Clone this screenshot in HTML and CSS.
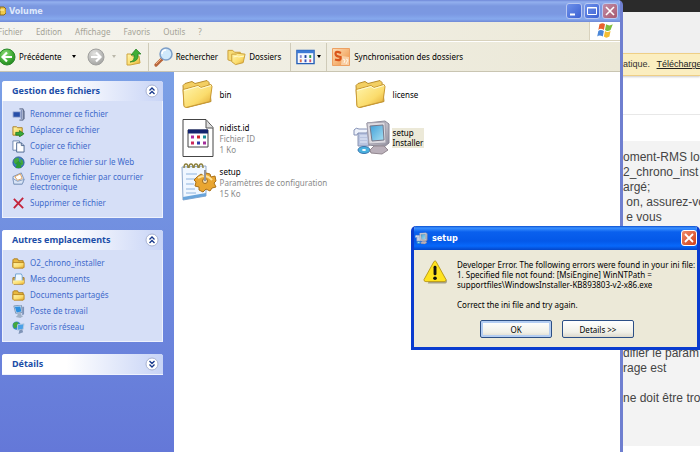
FILE: index.html
```html
<!DOCTYPE html>
<html lang="fr">
<head>
<meta charset="utf-8">
<title>Volume</title>
<link rel="stylesheet" href="styles.css">
</head>
<body>
<svg class="defs" aria-hidden="true">
  <defs>
    <linearGradient id="gold" x1="0" y1="0" x2="1" y2="1"><stop offset="0" stop-color="#fff6b0"/><stop offset=".6" stop-color="#fbdc6c"/><stop offset="1" stop-color="#dfa32c"/></linearGradient>
    <linearGradient id="screen" x1="0" y1="0" x2="1" y2="1"><stop offset="0" stop-color="#3f9fd8"/><stop offset="1" stop-color="#a9e0f2"/></linearGradient>
    <linearGradient id="metal" x1="0" y1="0" x2="1" y2="1"><stop offset="0" stop-color="#eeeef2"/><stop offset="1" stop-color="#8d8b9a"/></linearGradient>
    <radialGradient id="green" cx=".4" cy=".3" r=".8"><stop offset="0" stop-color="#8fdc78"/><stop offset=".6" stop-color="#3ca832"/><stop offset="1" stop-color="#1d7a1d"/></radialGradient>
    <radialGradient id="grey" cx=".4" cy=".3" r=".8"><stop offset="0" stop-color="#e2e2e0"/><stop offset="1" stop-color="#9d9d9b"/></radialGradient>
    <linearGradient id="orange" x1="0" y1="0" x2="1" y2="1"><stop offset="0" stop-color="#fbdcb8"/><stop offset=".5" stop-color="#f6b87c"/><stop offset="1" stop-color="#ec8a3c"/></linearGradient>
    <symbol id="folder" viewBox="0 0 31 29">
      <path d="M1 6 3 4 10 2 13 4 25 1 27 3 29 22 5 28 2 26z" fill="#f3cf62" stroke="#b98d2e"/>
      <path d="M1 10 5 9 16 6 19 8 29 5 30 7 28 22 4 28 2 27z" fill="url(#gold)" stroke="#c99a34"/>
      <path d="M2 11 16 7 19 9 29 6" fill="none" stroke="#fffbd6"/>
    </symbol>
    <symbol id="folder-small" viewBox="0 0 14 12">
      <path d="M1 10V2l1-1h4l1 2h5v7z" fill="#e9b93f" stroke="#a97a1c"/>
      <path d="M1 5h12v5l-1 1H2l-1-1z" fill="url(#gold)" stroke="#b98620"/>
    </symbol>
    <symbol id="computer" viewBox="0 0 14 14">
      <path d="M2 1 10 0 11 8 4 9z" fill="#d5e4f4" stroke="#7f97b5"/>
      <path d="M3 2 9 1.500 10 7 5 8z" fill="#2c8fe0"/>
      <path d="M6 9h4v2l2 1-3 2-5-1 2-2z" fill="#9fb0c6"/>
      <path d="M11 2h2v8l-2 1z" fill="#7d93b8"/>
    </symbol>
    <symbol id="installer" viewBox="0 0 38 34">
      <path d="M5 9h12l-1 16H5z" fill="#b9c4e0" stroke="#8a94b2"/>
      <path d="M1 9q2-3 5-1h9l-1 4H5L4 14H1z" fill="#eef2fb" stroke="#8390b5"/>
      <path d="M7 15h7M7 18h7M7 21h7" stroke="#e4eaf8"/>
      <ellipse cx="11" cy="29" rx="6" ry="3.500" fill="#49b1df" stroke="#3874ae"/>
      <ellipse cx="11" cy="29" rx="2" ry="1" fill="#fff"/>
      <path d="M14 2 32 0 36 3 36 22 31 26 16 24z" fill="url(#metal)" stroke="#898796"/>
      <path d="M14 2 32 1 33 22 16 23z" fill="#dcdae0" stroke="#a3a0ad"/>
      <path d="M17 5 30 4 31 19 19 20z" fill="url(#screen)" stroke="#777788"/>
      <path d="M21 25h10l4 4-6 4-11-1-1-3z" fill="#bab0ba" stroke="#92878f"/>
    </symbol>
    <symbol id="chevrons" viewBox="0 0 14 14">
      <circle cx="7" cy="7" r="6" fill="#fff" stroke="#a9b3d2"/>
      <path d="M4.500 6.500 7 4 9.500 6.500M4.500 10 7 7.500 9.500 10" fill="none" stroke="#17388c" stroke-width="1.300"/>
    </symbol>
  </defs>
</svg>

<main class="page">
  <div class="page-top"></div>
  <div class="page-head"></div>
  <p class="notice">atique. <a href="#">Télécharger</a></p>
  <div class="page-gap"></div>
  <div class="code">
    <p>oment-RMS lo<br>2_chrono_inst<br>argé;<br>&nbsp;on, assurez-vo<br>&nbsp;e vous</p>
    <p class="code-rest">difier le param<br>rage est<br><br>ne doit être tro</p>
  </div>
</main>

<section class="explorer" aria-label="Volume">
  <header class="titlebar">
    <svg class="title-icon" viewBox="0 0 6 10"><path d="M0 1h4l2 2v4L4 9H0z" fill="#f0ca4b" stroke="#8c6a1c"/><path d="M0 4h4" stroke="#fff5b8"/></svg>
    <h1>Volume</h1>
    <div class="controls">
      <button aria-label="Réduire"><svg viewBox="0 0 14 14"><path d="M3 10.500h5" stroke="#fff" stroke-width="2"/></svg></button>
      <button aria-label="Agrandir"><svg viewBox="0 0 14 14"><path d="M2.500 3.500h9v7h-9zM2 4h10" fill="none" stroke="#fff"/></svg></button>
      <button class="faded-close" aria-label="Fermer"><svg viewBox="0 0 14 14"><path d="m3 3 8 8M11 3l-8 8" stroke="#fff" stroke-width="1.600"/></svg></button>
    </div>
  </header>
  <nav class="menu" aria-label="Menu">
    <button>Fichier</button><button>Edition</button><button>Affichage</button><button>Favoris</button><button>Outils</button><button>?</button>
    <span class="flag"><svg viewBox="0 0 18 16"><path d="M4 2q3-2 5 0L8 7Q5 5 3 7z" fill="#e8602c"/><path d="M10 2q3 2 6 0l-2 5q-3 2-5 0z" fill="#7fbd3c"/><path d="M3 8q2-2 5 0l-1 5q-3-2-5 0z" fill="#4a86d8"/><path d="M9 8q2 2 5 0l-1 5q-3 2-5 0z" fill="#f4bd33"/></svg></span>
  </nav>
  <div class="toolbar">
    <button class="back"><svg viewBox="0 0 18 18"><circle cx="9" cy="9" r="8" fill="url(#green)" stroke="#2b8a2b"/><path d="M14 9H5M9 4.500 4.500 9 9 13.500" fill="none" stroke="#fff" stroke-width="2.200"/></svg>Précédente<i class="caret"></i></button>
    <button class="forward" aria-label="Suivante"><svg viewBox="0 0 18 18"><circle cx="9" cy="9" r="8" fill="url(#grey)" stroke="#a0a09e"/><path d="M4 9h9M9 4.500 13.500 9 9 13.500" fill="none" stroke="#fff" stroke-width="2.200"/></svg><i class="caret pale"></i></button>
    <button class="up" aria-label="Dossier parent"><svg viewBox="0 0 18 18"><path d="M2 6h4l1 2h7l1 7-10 2H2z" fill="url(#gold)" stroke="#cfa43c"/><path d="M5 14q5-1 4-7H6l5-6 5 5h-3q1 8-8 8z" fill="#3fae35" stroke="#23801f" stroke-width=".7"/></svg></button>
    <button class="search"><svg viewBox="0 0 20 20"><path d="m2 18 6-6" stroke="#b8653a" stroke-width="3.200" stroke-linecap="round"/><path d="m2 17 6-6" stroke="#f0b183"/><circle cx="12" cy="7" r="6" fill="#cfe9fb" stroke="#7d9fc8" stroke-width="1.500"/><path d="M8 7q0-4 4-4" fill="none" stroke="#fff" stroke-width="1.500"/></svg>Rechercher</button>
    <button class="folders"><svg viewBox="0 0 20 18"><path d="M1 2h5l2 2h6v9H4l-3-1z" fill="#f7dc77" stroke="#c99d36"/><path d="M5 6h5l1-1 8 1-2 9-8 2-4-3z" fill="url(#gold)" stroke="#c99d36"/><path d="m7 9 4-1 1 1 6-1" stroke="#fffbd2" fill="none"/></svg>Dossiers</button>
    <button class="views" aria-label="Affichage"><svg viewBox="0 0 20 16"><path d="M1 1h18v14H1z" fill="#f5f9ff" stroke="#2761b8" stroke-width="1.500"/><path d="M1 2.500h18" stroke="#3d7bd6" stroke-width="3"/><g stroke-width="3"><path d="M4 7.500h2" stroke="#8a8ad0"/><path d="M9 7.500h2" stroke="#2044a0"/><path d="M14 7.500h2" stroke="#2f9a3e"/><path d="M4 12h2" stroke="#dc6a4b"/><path d="M9 12h2" stroke="#3c54b8"/><path d="M14 12h2" stroke="#cf5470"/></g></svg><i class="caret"></i></button>
    <button class="sync"><svg viewBox="0 0 18 18"><path d="M.5.5h17v17H.5z" fill="url(#orange)" stroke="#eda062"/><path d="M10 8l7 1v8H9z" fill="#f9cfa4"/><path d="m11 11 2 1-1 3M14 11l2 1-2 4" fill="none" stroke="#fff3e4"/><path d="M9 5Q3.500 2.500 3.500 5.500T8.500 9Q9.500 13.500 3 11.500" fill="none" stroke="#d9541a" stroke-width="2.200"/></svg>Synchronisation des dossiers</button>
  </div>
  <div class="content">
    <aside class="tasks">
      <section class="panel">
        <header><h2>Gestion des fichiers</h2><button aria-label="Réduire"><svg><use href="#chevrons"/></svg></button></header>
        <ul>
          <li><a href="#"><svg viewBox="0 0 14 14"><path d="M1 4h8v6H1z" fill="#284fa8" stroke="#b4bfdd"/><path d="M8 1h4v12H8M12 3h1v9" fill="none" stroke="#4a5878"/><path d="M10 2v10" stroke="#6679a8"/></svg>Renommer ce fichier</a></li>
          <li><a href="#"><svg viewBox="0 0 14 14"><path d="M1 3h4l1 1h5v8H1z" fill="url(#gold)" stroke="#a97c20"/><path d="M4 9h4V7l5 3.500L8 14v-2H4z" fill="#39a93a" stroke="#197020" stroke-width=".7"/></svg>Déplacer ce fichier</a></li>
          <li><a href="#"><svg viewBox="0 0 14 14"><path d="M1 1h7v10H1z" fill="#fff" stroke="#6882ac"/><path d="M5 3h5l3 3v7H5z" fill="#fff" stroke="#49658f"/><path d="M10 3v3h3" fill="none" stroke="#49658f"/></svg>Copier ce fichier</a></li>
          <li><a href="#"><svg viewBox="0 0 14 14"><circle cx="7" cy="7" r="6" fill="#3c7ec7" stroke="#285992"/><path d="M2 4q3-3 5-2l1 3-4 4-2-2zM9 3q4 2 3 6l-3 2z" fill="#44a840"/><path d="m4 13 1-4H3l4-4 4 4H9l1 4z" fill="#2a9b35"/></svg>Publier ce fichier sur le Web</a></li>
          <li class="two-line"><a href="#"><svg viewBox="0 0 14 14"><path d="m1 5 9-4 3 7-2 5H2z" fill="#eef3fc" stroke="#7791ba"/><path d="m3 5 6-3 2 5-5 2z" fill="#fff" stroke="#db9c54"/><path d="m1 7 5 3 7-2-2 5H2z" fill="#d9e5f7" stroke="#829abf"/></svg>Envoyer ce fichier par courrier électronique</a></li>
          <li><a href="#"><svg viewBox="0 0 14 14"><path d="m2 2 10 10M12 1 2 12" stroke="#c3243c" stroke-width="2" fill="none"/></svg>Supprimer ce fichier</a></li>
        </ul>
      </section>
      <section class="panel">
        <header><h2>Autres emplacements</h2><button aria-label="Réduire"><svg><use href="#chevrons"/></svg></button></header>
        <ul>
          <li><a href="#"><svg><use href="#folder-small"/></svg>O2_chrono_installer</a></li>
          <li><a href="#"><svg viewBox="0 0 14 14"><path d="M1 5h12v6l-1 1H2l-1-1z" fill="#e4b34a" stroke="#997025"/><path d="M4 1h6l1 2v6H3z" fill="#eff8ff" stroke="#6fa2cf"/><path d="M1 8h12v4H1z" fill="url(#gold)"/></svg>Mes documents</a></li>
          <li><a href="#"><svg><use href="#folder-small"/></svg>Documents partagés</a></li>
          <li><a href="#"><svg><use href="#computer"/></svg>Poste de travail</a></li>
          <li><a href="#"><svg viewBox="0 0 14 14"><circle cx="5" cy="5" r="4.500" fill="#3586cf"/><path d="M1 3q3-3 6-1L5 7 2 8z" fill="#45a83d"/><path d="m6 4 7-1-1 6-6 1z" fill="#4aa1e8" stroke="#b9cbe0"/><path d="m8 10 3-1 1 3-5 2z" fill="#7f94b7"/></svg>Favoris réseau</a></li>
        </ul>
      </section>
      <section class="panel">
        <header><h2>Détails</h2><button class="expand" aria-label="Développer"><svg><use href="#chevrons"/></svg></button></header>
      </section>
    </aside>
    <ul class="files">
      <li><svg class="folder"><use href="#folder"/></svg><div><b>bin</b></div></li>
      <li><svg class="folder"><use href="#folder"/></svg><div><b>license</b></div></li>
      <li><svg viewBox="0 0 32 38"><path d="M1 .5h23l7 8v29H1z" fill="#fff" stroke="#444"/><path d="M24 1v8h7" fill="#ddd" stroke="#555"/><path d="M6 11h20v17H6z" fill="#fff" stroke="#444"/><path d="M6 12.500h20" stroke="#14246e" stroke-width="4"/><g stroke-width="3"><path d="M9 18h3" stroke="#b02aa0"/><path d="M15 18h3" stroke="#d02428"/><path d="M21 18h3" stroke="#188c96"/><path d="M9 24h3" stroke="#cc285c"/><path d="M15 24h3" stroke="#2d3caa"/><path d="M21 24h3" stroke="#a42e9a"/></g></svg><div><b>nidist.id</b><span>Fichier ID</span><span>1 Ko</span></div></li>
      <li class="selected"><svg class="wide"><use href="#installer"/></svg><div><b>setup<br>Installer</b></div></li>
      <li><svg class="wide" viewBox="0 0 36 38"><path d="M1 4 25 3v30L2 37z" fill="#f0f7ff" stroke="#8fa9cc"/><path d="m2 34 23-4v3L2 37z" fill="#6aa5db"/><path d="M5 11h11M5 16h10M5 21h8M5 26h9M5 30h10" stroke="#8fb4de"/><path d="M3 5q0-4 2-4t2 4M8 5q0-4 2-4t2 4M13 5q0-4 2-4t2 4M18 5q0-4 2-4t2 4" fill="none" stroke="#8e8240" stroke-width="1.500"/><path d="m16 14 4-3 3 2 2-3 4 1 1 3 4-1 1 5-2 2 2 4-4 1-2 3-4-2-3 3-4-2v-3l-4-1 1-4-2-2 3-3z" fill="#e9a631" stroke="#aa7119"/><path d="M17 15q8-5 14 2" fill="none" stroke="#ffe094" stroke-width="2"/><circle cx="24" cy="18" r="2.500" fill="#f5dfb1" stroke="#a56d18"/><path d="M23 7h2v11h-2z" fill="#94949a"/></svg><div><b>setup</b><span>Paramètres de configuration</span><span>15 Ko</span></div></li>
    </ul>
  </div>
</section>

<section class="dialog" role="alertdialog" aria-labelledby="dialog-title">
  <header>
    <svg class="dialog-icon"><use href="#installer"/></svg>
    <h2 id="dialog-title">setup</h2>
    <button class="close" aria-label="Fermer"><svg viewBox="0 0 14 14"><path d="m3 3 8 8M11 3l-8 8" stroke="#fff" stroke-width="1.800"/></svg></button>
  </header>
  <div class="dialog-body">
    <div class="message">
      <svg viewBox="0 0 26 26"><path d="M13 3 25 22q0 3-3 3H5z" fill="#a5a18a"/><path d="M11.500 2q1.500-1 2 0L24 21q0 2-2 2H3q-2 0-2-2z" fill="#ffe31f" stroke="#bb9b16"/><path d="M12.500 8v7" stroke="#111" stroke-width="3" stroke-linecap="round"/><circle cx="12.500" cy="19.500" r="1.900" fill="#111"/></svg>
      <p>Developer Error. The following errors were found in your ini file:<br>1. Specified file not found: [MsiEngine] WinNTPath =<br>supportfiles\WindowsInstaller-KB893803-v2-x86.exe<br><br>Correct the ini file and try again.</p>
    </div>
    <div class="actions"><button class="default">OK</button><button>Details &gt;&gt;</button></div>
  </div>
</section>
</body>
</html>
```
FILE: styles.css
```css
* { box-sizing: border-box; }
body {
  position: relative;
  margin: 0;
  min-height: 100vh;
  overflow: hidden;
  background: #fff;
  font: 8px/11px "Noto Sans", sans-serif;
  color: #000;
}
h1, h2, p, ul { margin: 0; padding: 0; font-size: inherit; }
ul { list-style: none; }
b { font-weight: 400; }
svg { display: block; flex: none; }
button {
  display: flex;
  align-items: center;
  margin: 0;
  padding: 0;
  border: 0;
  background: none;
  font: inherit;
  color: inherit;
  white-space: nowrap;
}
.defs { position: absolute; width: 0; height: 0; }

/* Web page behind the windows */
.page > * { padding-left: 89%; white-space: nowrap; }
.page-top { height: 12px; background: #2b2b2b; }
.page-head { height: 41px; background: #f0f0f0; }
.notice {
  height: 23px;
  border: solid #efcf86;
  border-width: 1px 0;
  background: #fbeec0;
  box-shadow: 0 1px 2px #ccc;
  font: 9px/21px "Liberation Sans", sans-serif;
  color: #333;
}
.notice a { margin-left: 4px; color: #222; }
.page-gap { height: 65px; background: linear-gradient(#e8e8e8, #e8e8e8) 0 38px / 100% 1px no-repeat; }
.code {
  height: 305px;
  padding-top: 9px;
  background: #f3f3f3;
  font: 12px/15px "Liberation Sans", sans-serif;
  color: #444;
}
.code-rest { margin-top: 121px; }

/* Explorer window */
.explorer {
  position: absolute;
  inset: 0 11% 0 0;
  display: flex;
  flex-direction: column;
  border-right: 3px solid #6f7fd0;
  border-top-right-radius: 5px;
  background: #fff;
  overflow: hidden;
}
.titlebar {
  display: flex;
  align-items: center;
  height: 22px;
  background: linear-gradient(#6f88d8, #93b0ee 2px, #7b98e0 6px, #7b98e2 14px, #86a9ee 19px, #7089d6);
}
.title-icon { width: 6px; height: 10px; }
.titlebar h1 { margin-left: 3px; font: bold 9px/12px "DejaVu Sans Condensed", sans-serif; color: #dfe8fb; }
.controls { display: flex; gap: 2px; margin-left: auto; padding-right: 2px; }
.controls button {
  justify-content: center;
  width: 16px;
  height: 16px;
  border: 1px solid #b9c8f2;
  border-radius: 3px;
  background: linear-gradient(135deg, #6d90ea, #3d62d2);
}
.controls .faded-close { background: linear-gradient(135deg, #c08ca6, #a85a70); }
.controls svg { width: 14px; height: 14px; }
.menu {
  display: flex;
  align-items: stretch;
  gap: 13px;
  height: 19px;
  margin-left: -2px;
  border-bottom: 1px solid #d8d2bd;
  background: linear-gradient(90deg, #f5f4ef, #ece9d8);
  color: #a5a397;
}
.flag {
  display: grid;
  place-items: center;
  width: 31px;
  margin-left: auto;
  border-left: 1px solid #d8d2bd;
  background: #fff;
}
.flag svg { width: 20px; height: 18px; }
.toolbar {
  display: flex;
  align-items: center;
  height: 31px;
  border-top: 1px solid #fff;
  border-bottom: 1px solid #c9c5b2;
  background: linear-gradient(90deg, #f4f3ec, #ebe8d7);
}
.toolbar svg { width: 18px; height: 18px; }
.caret { border: solid transparent; border-width: 3px 2px 0; border-top-color: #000; }
.caret.pale { border-top-color: #bbb8aa; }
.back { gap: 3px; margin-left: -2px; }
.back .caret { margin-left: 7px; }
.forward { gap: 7px; margin-left: 11px; }
.up { margin-left: 9px; }
.search { gap: 2px; margin-left: 5px; padding-left: 5px; height: 28px; border-left: 1px solid #cfcbb9; }
.toolbar .search svg { width: 20px; height: 20px; }
.folders { gap: 3px; margin-left: 9px; }
.views, .sync { height: 28px; border-left: 1px solid #cfcbb9; }
.views { gap: 2px; margin-left: 9px; padding-left: 5px; }
.toolbar .folders svg { width: 19px; }
.toolbar .views svg { width: 19px; height: 16px; }
.sync { gap: 4px; margin-left: 5px; padding-left: 5px; }
.content { display: flex; flex: 1; min-height: 0; }

/* Task pane */
.tasks {
  width: 28%;
  padding: 9px 11px 0 2px;
  background: linear-gradient(#7ba0e6, #6478d8);
}
.panel { margin-bottom: 12px; background: #d6dff7; border: 1px solid #eef2fd; border-top: 0; border-radius: 3px 3px 0 0; }
.panel header {
  display: flex;
  align-items: center;
  justify-content: space-between;
  height: 20px;
  margin: 0 -1px;
  padding: 0 4px 0 10px;
  border-radius: 3px 3px 0 0;
  background: linear-gradient(90deg, #fff 40%, #c8d4f6);
}
.panel h2 { font-weight: 700; font-size: 9px; line-height: 12px; color: #1c4ea8; }
.panel header svg { width: 14px; height: 14px; }
.expand { transform: rotate(180deg); }
.panel ul { display: grid; gap: 5px; padding: 7px 8px 9px 9px; }
.panel a { display: flex; gap: 5px; color: #3f6bcb; text-decoration: none; }
.panel li svg { width: 13px; height: 13px; margin-bottom: -2px; }
.two-line { line-height: 10px; }

/* File tiles */
.files {
  display: grid;
  flex: 1;
  grid-template-columns: 173px 173px;
  grid-auto-rows: 44px;
  align-content: start;
  padding-left: 8px;
}
.files li { display: flex; align-items: center; }
.files li > svg { width: 32px; height: 38px; margin-right: 6px; }
.files li > .folder { width: 31px; height: 30px; margin-right: 7px; }
.files li > .wide { width: 38px; height: 38px; margin: 0 2px 0 -2px; }
.files span { display: block; color: #8a8a8a; }
.selected div { padding: 0 1px; margin-left: -1px; background: #ece9d8; line-height: 10px; }

/* Error dialog */
.dialog {
  position: absolute;
  top: 226px;
  left: 411px;
  right: 0;
  border: solid #0a3ccf;
  border-width: 0 3px 3px;
  border-radius: 5px 5px 0 0;
  background: #ece9d8;
  overflow: hidden;
}
.dialog header {
  display: flex;
  align-items: center;
  gap: 4px;
  height: 24px;
  margin: 0 -3px;
  padding: 0 3px 0 4px;
  background: linear-gradient(#0a4ed0, #3c92ff 2px, #0a60ee 6px, #0458e8 15px, #0768fb 20px, #0446c8);
}
.dialog-icon { width: 13px; height: 13px; }
.dialog h2 { font: bold 9px/12px "DejaVu Sans Condensed", sans-serif; color: #fff; }
.close { justify-content: center; width: 16px; height: 16px; margin-left: auto; border: 1px solid #fff; border-radius: 3px; background: linear-gradient(135deg, #f08a68, #d0401a); }
.close svg { width: 14px; height: 14px; }
.dialog-body { padding: 9px 0 9px 9px; }
.message { display: flex; gap: 9px; line-height: 10px; white-space: nowrap; }
.message svg { width: 25px; height: 26px; }
.message p { padding-top: 1px; }
.actions { display: flex; gap: 10px; margin: 10px 0 0 57px; }
.actions button {
  justify-content: center;
  width: 72px;
  height: 18px;
  border: 1px solid #2c4f86;
  border-radius: 2px;
  background: linear-gradient(#fff, #f1f0e8 70%, #dcd8cc);
}
.actions .default { box-shadow: inset 0 0 0 2px #b4cdf2; }
```
